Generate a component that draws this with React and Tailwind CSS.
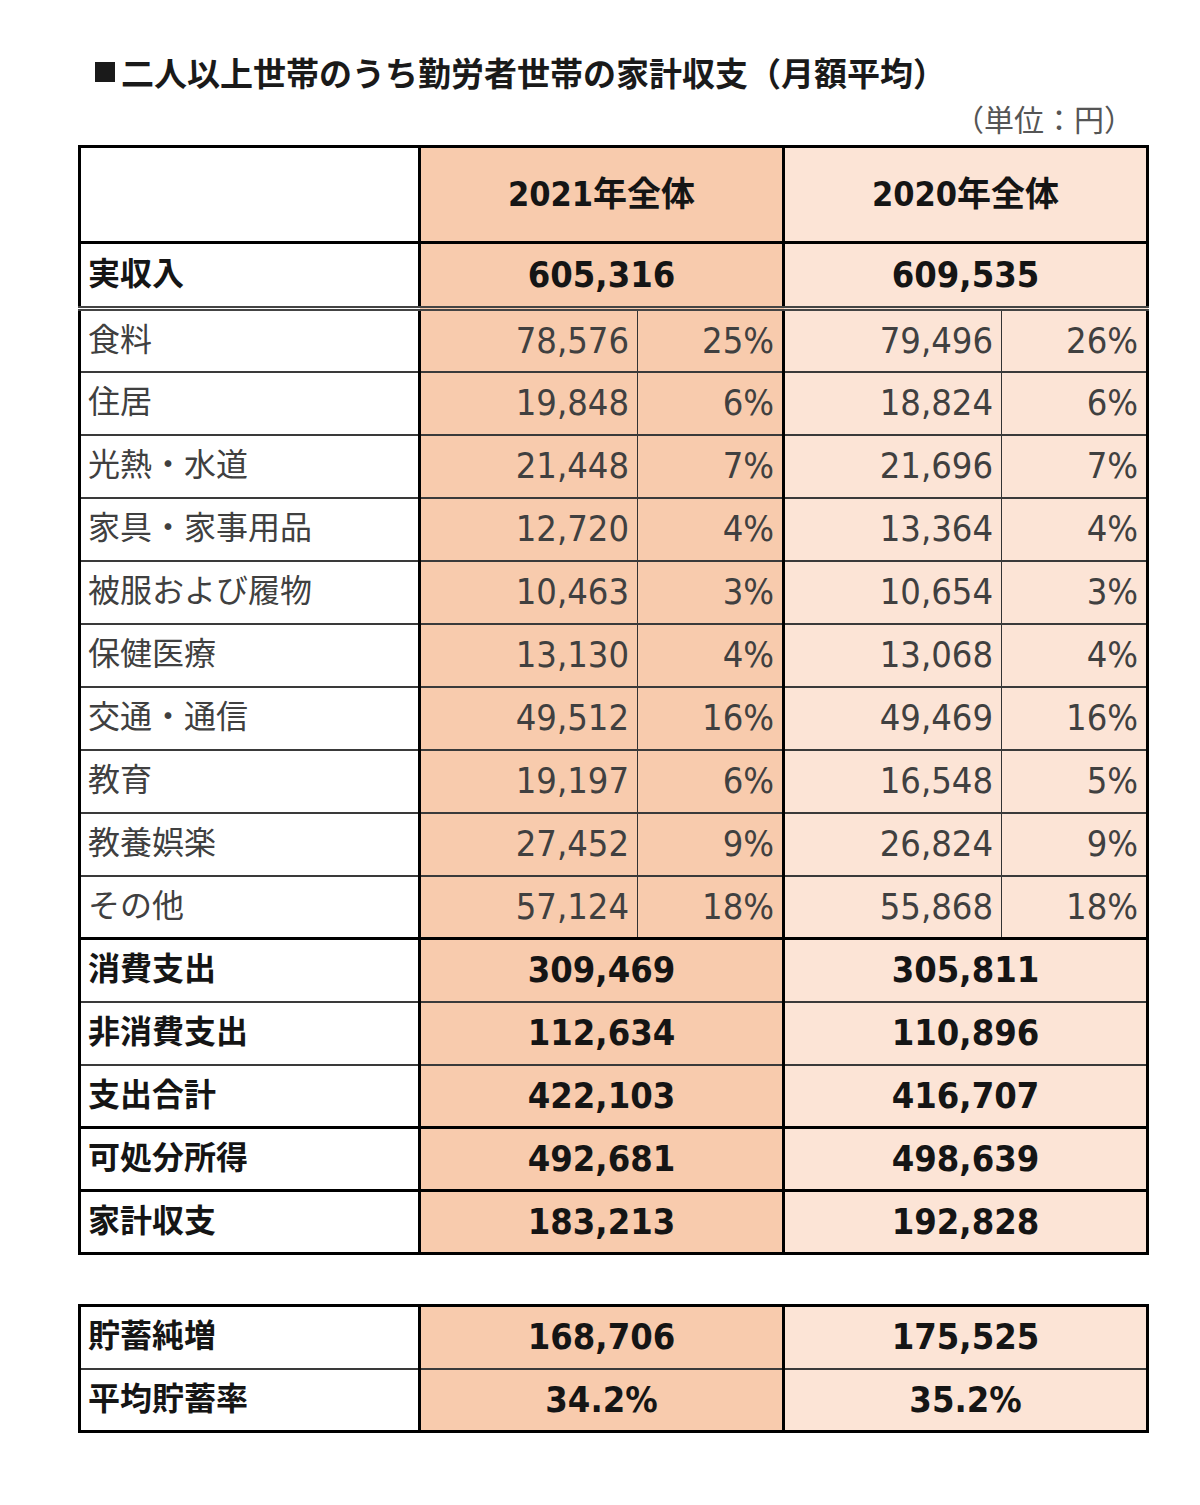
import React from 'react';

const details = [
  ['食料', '78,576', '25%', '79,496', '26%'],
  ['住居', '19,848', '6%', '18,824', '6%'],
  ['光熱・水道', '21,448', '7%', '21,696', '7%'],
  ['家具・家事用品', '12,720', '4%', '13,364', '4%'],
  ['被服および履物', '10,463', '3%', '10,654', '3%'],
  ['保健医療', '13,130', '4%', '13,068', '4%'],
  ['交通・通信', '49,512', '16%', '49,469', '16%'],
  ['教育', '19,197', '6%', '16,548', '5%'],
  ['教養娯楽', '27,452', '9%', '26,824', '9%'],
  ['その他', '57,124', '18%', '55,868', '18%'],
];

const totals = [
  ['消費支出', '309,469', '305,811', 'thin'],
  ['非消費支出', '112,634', '110,896', 'thin'],
  ['支出合計', '422,103', '416,707', 'thick'],
  ['可処分所得', '492,681', '498,639', 'thick'],
  ['家計収支', '183,213', '192,828', 'none'],
];

const savings = [
  ['貯蓄純増', '168,706', '175,525', 'thin'],
  ['平均貯蓄率', '34.2%', '35.2%', 'none'],
];

const jp = 'font-["Noto_Sans_CJK_JP",sans-serif]';
const num = 'font-["DejaVu_Sans_Condensed","DejaVu_Sans","Noto_Sans_CJK_JP",sans-serif]';

const ColWidths = () => (
  <colgroup>
    <col className="w-[340px]" />
    <col className="w-[218px]" />
    <col className="w-[146px]" />
    <col className="w-[218px]" />
    <col className="w-[146px]" />
  </colgroup>
);

const rowBorder = (kind) =>
  kind === 'thick'
    ? 'border-b-[3px] border-b-black'
    : kind === 'thin'
    ? 'border-b-2 border-b-[#3a3a3a]'
    : '';

const BoldRow = ({ label, a, b, kind }) => (
  <tr className={`h-[63px] ${rowBorder(kind)}`}>
    <td className={`${jp} pl-[7px] pb-[8px] text-[32px] font-bold text-[#151515] border-r-[3px] border-r-black`}>
      {label}
    </td>
    <td colSpan={2} className={`${num} bg-[#f8cbad] text-center text-[36px] font-bold text-[#151515] border-r-[3px] border-r-black`}>
      {a}
    </td>
    <td colSpan={2} className={`${num} bg-[#fce4d6] text-center text-[36px] font-bold text-[#151515]`}>
      {b}
    </td>
  </tr>
);

export default function App() {
  return (
    <div className="w-[1200px] h-[1505px] bg-white">
      <div className="pt-[50px] pl-[95px]">
        <h1 className={`${jp} flex items-center text-[33px] font-bold leading-[44px] text-[#1a1a1a]`}>
          <span className="mr-[6px] inline-block w-[20px] h-[20px] bg-[#1a1a1a]" />
          二人以上世帯のうち勤労者世帯の家計収支（月額平均）
        </h1>
      </div>
      <div className={`${jp} w-[1134px] text-right text-[30px] leading-[36px] text-[#555] mt-[6px]`}>
        （単位：円）
      </div>

      <table className="ml-[78px] mt-[9px] w-[1068px] table-fixed border-collapse border-[3px] border-black">
        <ColWidths />
        <tbody>
          <tr className="h-[96px] border-b-[3px] border-b-black">
            <td className="border-r-[3px] border-r-black" />
            <td colSpan={2} className={`${num} bg-[#f8cbad] text-center text-[34px] font-bold text-[#151515] border-r-[3px] border-r-black`}>
              2021年全体
            </td>
            <td colSpan={2} className={`${num} bg-[#fce4d6] text-center text-[34px] font-bold text-[#151515]`}>
              2020年全体
            </td>
          </tr>
          <tr className="h-[66px] border-b-[5px] border-double border-b-[#444]">
            <td className={`${jp} pl-[7px] pb-[8px] text-[32px] font-bold text-[#151515] border-r-[3px] border-r-black`}>
              実収入
            </td>
            <td colSpan={2} className={`${num} bg-[#f8cbad] text-center text-[36px] font-bold text-[#151515] border-r-[3px] border-r-black`}>
              605,316
            </td>
            <td colSpan={2} className={`${num} bg-[#fce4d6] text-center text-[36px] font-bold text-[#151515]`}>
              609,535
            </td>
          </tr>
          {details.map(([label, a, ap, b, bp], i) => (
            <tr
              key={label}
              className={`h-[63px] ${i === details.length - 1 ? 'border-b-[3px] border-b-black' : 'border-b-2 border-b-[#3a3a3a]'}`}
            >
              <td className={`${jp} pl-[7px] pb-[8px] text-[32px] text-[#404040] border-r-[3px] border-r-black`}>{label}</td>
              <td className={`${num} bg-[#f8cbad] pr-[8px] text-right text-[36px] text-[#404040] border-r border-r-[#333]`}>{a}</td>
              <td className={`${num} bg-[#f8cbad] pr-[8px] text-right text-[36px] text-[#404040] border-r-[3px] border-r-black`}>{ap}</td>
              <td className={`${num} bg-[#fce4d6] pr-[8px] text-right text-[36px] text-[#404040] border-r border-r-[#333]`}>{b}</td>
              <td className={`${num} bg-[#fce4d6] pr-[8px] text-right text-[36px] text-[#404040]`}>{bp}</td>
            </tr>
          ))}
          {totals.map(([label, a, b, kind]) => (
            <BoldRow key={label} label={label} a={a} b={b} kind={kind} />
          ))}
        </tbody>
      </table>

      <table className="ml-[78px] mt-[49px] w-[1068px] table-fixed border-collapse border-[3px] border-black">
        <ColWidths />
        <tbody>
          {savings.map(([label, a, b, kind]) => (
            <BoldRow key={label} label={label} a={a} b={b} kind={kind} />
          ))}
        </tbody>
      </table>
    </div>
  );
}
